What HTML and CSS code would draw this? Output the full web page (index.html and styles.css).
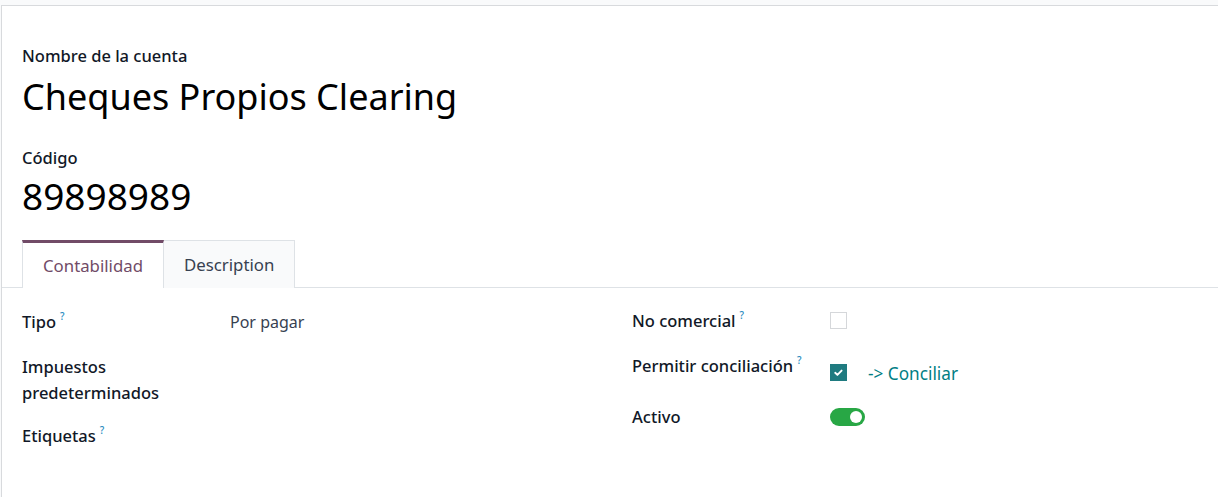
FILE: index.html
```html
<!DOCTYPE html>
<html lang="es">
<head>
<meta charset="utf-8">
<title>Cuenta</title>
<link rel="stylesheet" href="styles.css">
</head>
<body>
<div class="sheet">
  <div class="head">
    <div class="lbl head-lbl">Nombre de la cuenta</div>
    <div class="big title">Cheques Propios Clearing</div>
    <div class="lbl head-lbl code-lbl">Código</div>
    <div class="big code">89898989</div>
  </div>
  <div class="tabs">
    <div class="tab active">Contabilidad</div>
    <div class="tab">Description</div>
  </div>
  <div class="groups">
    <div class="group left">
      <div class="row r1">
        <div class="lbl cell-lbl">Tipo<sup class="help">?</sup></div>
        <div class="val">Por pagar</div>
      </div>
      <div class="row r2">
        <div class="lbl cell-lbl">Impuestos predeterminados</div>
        <div class="val"></div>
      </div>
      <div class="row r3">
        <div class="lbl cell-lbl">Etiquetas<sup class="help">?</sup></div>
        <div class="val"></div>
      </div>
    </div>
    <div class="group right">
      <div class="row q1">
        <div class="lbl cell-lbl">No comercial<sup class="help">?</sup></div>
        <div class="val"><span class="check"></span></div>
      </div>
      <div class="row q2">
        <div class="lbl cell-lbl">Permitir conciliación<sup class="help">?</sup></div>
        <div class="val widget-line">
          <span class="check on"><svg viewBox="0 0 17 17" width="17" height="17"><path d="M5.2 8.8 L7.4 10.9 L11.6 6.6" fill="none" stroke="#fff" stroke-width="1.9" stroke-linecap="round" stroke-linejoin="round"/></svg></span>
          <span class="link">-&gt; Conciliar</span>
        </div>
      </div>
      <div class="row q3">
        <div class="lbl cell-lbl">Activo</div>
        <div class="val"><span class="toggle"><span class="knob"></span></span></div>
      </div>
    </div>
  </div>
</div>
</body>
</html>
```
FILE: styles.css
```css
html, body {
  margin: 0;
  padding: 0;
}
body {
  background: #f9fafb;
  font-family: "Noto Sans", "Open Sans", sans-serif;
  font-size: 16px;
  color: #111827;
  height: 497px;
  overflow: hidden;
}
.sheet {
  box-sizing: border-box;
  margin: 5px 0 0 1px;
  background: #fff;
  border: 1px solid #d8dadd;
  border-right: none;
  border-bottom: none;
  height: 492px;
}
.head {
  padding: 38px 0 0 20px;
}
.lbl {
  font-weight: 500;
  color: #111827;
  line-height: 24px;
  font-size: 16.5px;
}
.big {
  font-size: 36px;
  line-height: 43px;
  color: #000;
  font-weight: 400;
}
.title {
  margin-top: 7px;
}
.code-lbl {
  margin-top: 28px;
}
.code {
  margin-top: 4px;
  font-size: 37px;
}
.tabs {
  display: flex;
  margin-top: 23px;
  padding-left: 20px;
  border-bottom: 1px solid #dee2e6;
  height: 47px;
}
.tab {
  box-sizing: border-box;
  height: 48px;
  padding: 0 20px;
  display: flex;
  align-items: center;
  border: 1px solid #dee2e6;
  border-bottom: none;
  background: #f9fafb;
  color: #374151;
  font-size: 16.8px;
}
.tab.active {
  border-top: 3px solid #714b67;
  background: #fff;
  color: #714b67;
  width: 142px;
  justify-content: center;
}
.tab + .tab {
  border-left: none;
}
.groups {
  display: flex;
  padding: 20px 0 0 20px;
}
.group.left {
  width: 610px;
}
.row {
  display: flex;
  align-items: flex-start;
}
.left .cell-lbl {
  width: 208px;
  line-height: 26px;
}
.right .cell-lbl {
  width: 198px;
  line-height: 26px;
}
.val {
  line-height: 26px;
  color: #374151;
}
.r1 { margin-top: 1px; margin-bottom: 19px; }
.r2 .cell-lbl { width: 160px; margin-right: 48px; }
.r2 { margin-bottom: 17px; }
.q1 { margin-bottom: 19px; }
.q2 { margin-bottom: 13px; }
.help {
  font-size: 10px;
  color: #2a8cc0;
  font-weight: 500;
  margin-left: 4px;
  vertical-align: top;
  position: relative;
  top: -6px;
}
.check {
  display: block;
  box-sizing: border-box;
  width: 17px;
  height: 17px;
  border: 1px solid #d5d7da;
  background: #fff;
  margin-top: 4px;
}
.check.on {
  background: #1f7b80;
  border-color: #1f7b80;
  margin-top: 0;
}
.check.on svg {
  display: block;
  margin: -1px;
}
.widget-line {
  height: 38px;
  display: flex;
  align-items: center;
  gap: 21px;
}
.link {
  color: #017e84;
  font-size: 17.2px;
  padding-top: 4px;
}
.toggle {
  display: block;
  width: 35px;
  height: 18px;
  border-radius: 9px;
  background: #28a745;
  margin-top: 4px;
  position: relative;
}
.knob {
  position: absolute;
  right: 3px;
  top: 3px;
  width: 12px;
  height: 12px;
  border-radius: 50%;
  background: #fff;
}
```
